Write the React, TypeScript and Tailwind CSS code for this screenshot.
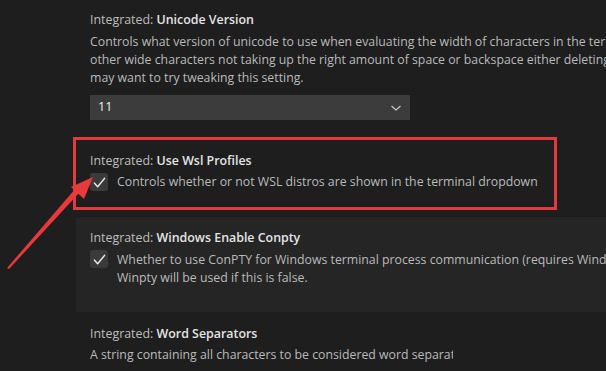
import React from "react";

const font = { fontFamily: '"Open Sans", "Noto Sans", sans-serif' };

const Title: React.FC<{ name: string }> = ({ name }) => (
  <div className="h-[18px] leading-[18px] whitespace-nowrap text-[12.4px]">
    <span className="text-[#bdbdbd]">Integrated: </span>
    <span className="font-semibold text-[#e4e4e4]">{name}</span>
  </div>
);

const Check: React.FC = () => (
  <div className="w-[18px] h-[18px] shrink-0 rounded-[3px] bg-[#3a3a3a] flex items-center justify-center">
    <svg width="15" height="15" viewBox="0 0 16 16" fill="none">
      <path
        d="M2.5 8.5 L6 12.5 L13.5 3.5"
        stroke="#e8e8e8"
        strokeWidth="1.5"
        strokeLinecap="round"
        strokeLinejoin="round"
      />
    </svg>
  </div>
);

const Line: React.FC<{ children: React.ReactNode }> = ({ children }) => (
  <div className="h-[18px] leading-[18px] whitespace-nowrap text-[12.3px] text-[#bababa]">
    {children}
  </div>
);

export default function App() {
  return (
    <div
      className="relative w-[606px] h-[371px] overflow-hidden bg-[#1e1e1e]"
      style={font}
    >
      {/* Unicode Version */}
      <div className="pl-[90px] pt-[11px]">
        <Title name="Unicode Version" />
        <div className="mt-[4px]">
          <Line>
            Controls what version of unicode to use when evaluating the width of
            characters in the terminal. If you experience emoji or
          </Line>
          <Line>
            other wide characters not taking up the right amount of space or
            backspace either deleting too much or too little then you
          </Line>
          <Line>may want to try tweaking this setting.</Line>
        </div>
        <div className="mt-[8px] w-[320px] h-[25px] bg-[#3c3c3c] flex items-center justify-between pl-[8px] pr-[8px]">
          <span className="text-[12.5px] text-[#f0f0f0]">11</span>
          <svg width="12" height="8" viewBox="0 0 12 8" fill="none">
            <path d="M1.5 2 L6 6 L10.5 2" stroke="#c8c8c8" strokeWidth="1.3" />
          </svg>
        </div>
      </div>

      {/* Use Wsl Profiles (highlighted) */}
      <div className="ml-[73px] mt-[17px] w-[484px] h-[73px] border-[3px] border-[#e03c3f] pl-[14px] pt-[12px]">
        <Title name="Use Wsl Profiles" />
        <div className="mt-[3px] flex gap-[9px]">
          <Check />
          <Line>
            Controls whether or not WSL distros are shown in the terminal
            dropdown
          </Line>
        </div>
      </div>

      {/* Windows Enable Conpty (focused row) */}
      <div className="ml-[76px] mt-[7px] h-[95px] bg-[#252526] pl-[14px] pt-[12px]">
        <Title name="Windows Enable Conpty" />
        <div className="mt-[3px] flex gap-[9px]">
          <Check />
          <div className="pt-[1px]">
            <Line>
              Whether to use ConPTY for Windows terminal process communication
              (requires Windows 10 build number 18309+).
            </Line>
            <Line>Winpty will be used if this is false.</Line>
          </div>
        </div>
      </div>

      {/* Word Separators */}
      <div className="pl-[90px] pt-[13px]">
        <Title name="Word Separators" />
        <div className="mt-[3px] w-[363px] overflow-hidden">
          <Line>
            A string containing all characters to be considered word separators
            by double click to select word feature.
          </Line>
        </div>
      </div>

      {/* annotation arrow */}
      <svg
        className="absolute left-0 top-0 pointer-events-none"
        width="606"
        height="371"
        viewBox="0 0 606 371"
      >
        <path d="M7 268 L9 269 L80 192 L76 188 Z" fill="#e8393d" />
        <path d="M93 177 L71 187 L84 199 Z" fill="#e8393d" />
      </svg>
    </div>
  );
}
